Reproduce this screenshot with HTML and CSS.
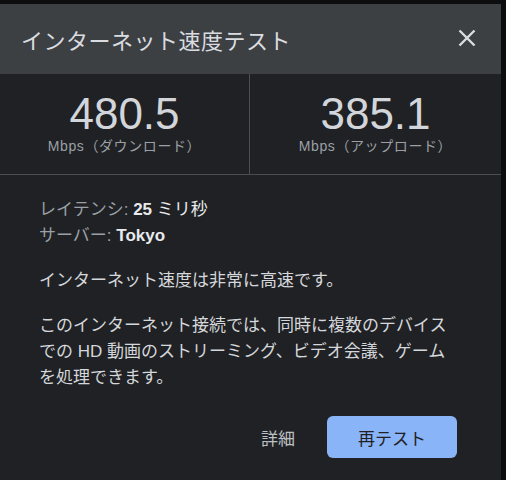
FILE: index.html
```html
<!DOCTYPE html>
<html lang="ja">

<head>
  <meta charset="UTF-8">
  <meta name="viewport" content="width=device-width, initial-scale=1.0">
  <title>インターネット速度テスト</title>
  <link rel="stylesheet" href="styles.css">
</head>

<body>

  <div class="dialog">
    <!-- Header -->
    <div class="dialog-header">
      <h2 class="dialog-title">インターネット速度テスト</h2>
      <button class="close-btn" aria-label="閉じる">
        <svg viewBox="0 0 24 24" width="24" height="24">
          <path d="M4.5 4.5L19.5 19.5M19.5 4.5L4.5 19.5" stroke="currentColor" stroke-width="2.4" fill="none"></path>
        </svg>
      </button>
    </div>

    <!-- Speed results -->
    <div class="stats">
      <div class="stat">
        <div class="stat-value">480.5</div>
        <div class="stat-label">Mbps（ダウンロード）</div>
      </div>
      <div class="stat">
        <div class="stat-value">385.1</div>
        <div class="stat-label">Mbps（アップロード）</div>
      </div>
    </div>

    <div class="details">
      <div class="meta">
        <div><span class="meta-key">レイテンシ:</span> <span class="meta-val"><b>25</b> ミリ秒</span></div>
        <div><span class="meta-key">サーバー:</span> <span class="meta-val"><b>Tokyo</b></span></div>
      </div>
      <p>インターネット速度は非常に高速です。</p>
      <p>このインターネット接続では、同時に複数のデバイスでの HD 動画のストリーミング、ビデオ会議、ゲームを処理できます。</p>
    </div>

    <div class="actions">
      <button class="btn-text">詳細</button>
      <button class="btn-primary">再テスト</button>
    </div>
  </div>

</body>

</html>
```

FILE: styles.css
```css
/* General Reset */
body {
  margin: 0;
  padding: 0;
  background: #0c0d0f;
  font-family: 'Liberation Sans', 'Noto Sans CJK JP', sans-serif;
  overflow: hidden;
}

/* Dialog */
.dialog {
  width: 501px;
  height: 476px;
  margin-top: 4px;
  background-color: #202124;
  color: #e8eaed;
}

.dialog-header {
  height: 70px;
  background-color: #3c4043;
  display: flex;
  align-items: center;
  justify-content: space-between;
  padding: 0 22px 0 21px;
  box-sizing: border-box;
}

.dialog-title {
  margin: 0;
  font-size: 22px;
  font-weight: normal;
  color: #dadce0;
  letter-spacing: 0.5px;
}

.close-btn {
  background: none;
  border: none;
  color: #dadce0;
  padding: 0;
  width: 24px;
  height: 24px;
  margin-top: -2px;
  cursor: pointer;
}

/* Results */
.stats {
  display: grid;
  grid-template-columns: 250px 1fr;
  height: 100px;
  border-bottom: 1px solid #4a4d51;
}

.stat {
  display: flex;
  flex-direction: column;
  align-items: center;
  padding-top: 17px;
}

.stat:first-child {
  border-right: 1px solid #4a4d51;
}

.stat-value {
  font-size: 44px;
  line-height: 46px;
  color: #d2d6db;
}

.stat-label {
  font-size: 14px;
  line-height: 18px;
  color: #9aa0a6;
  letter-spacing: 0.6px;
}

/* Details */
.details {
  padding: 22px 40px 0 39px;
  font-size: 17px;
  color: #d4d7db;
}

.meta {
  line-height: 26px;
}

.meta-key {
  color: #9aa0a6;
}

.meta-val {
  color: #e8eaed;
}

.details p {
  margin: 19px 0 0;
  line-height: 26px;
  width: 421px;
}

.details p + p {
  margin-top: 19px;
}

/* Buttons */
.actions {
  display: flex;
  justify-content: flex-end;
  align-items: center;
  gap: 32px;
  padding: 25px 44px 0 0;
}

.btn-text {
  background: none;
  border: none;
  font-family: inherit;
  font-size: 17px;
  color: #bdc1c6;
  padding: 0;
}

.btn-primary {
  width: 130px;
  height: 42px;
  background-color: #8ab4f8;
  color: #202124;
  border: none;
  border-radius: 6px;
  font-family: inherit;
  font-size: 17px;
}
```
